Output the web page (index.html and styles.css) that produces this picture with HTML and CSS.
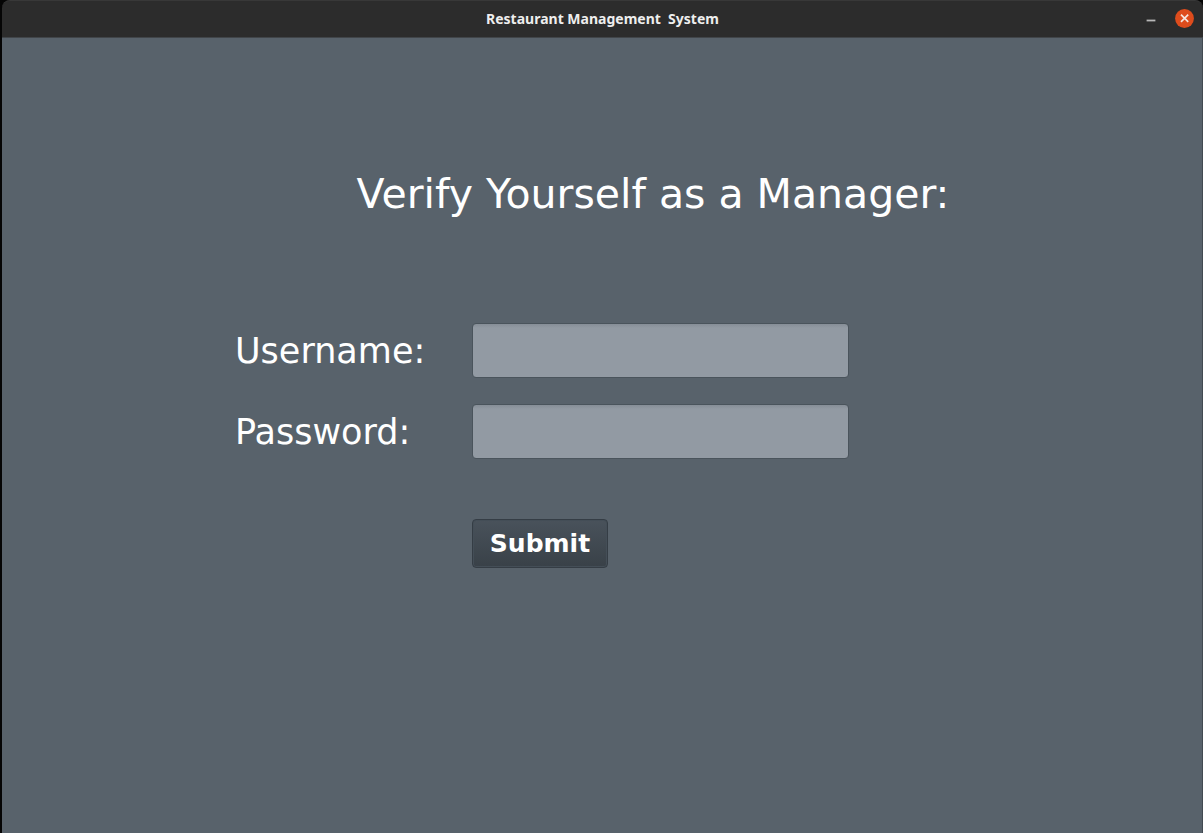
FILE: index.html
```html
<!DOCTYPE html>
<html lang="en">
<head>
<meta charset="utf-8">
<title>Restaurant Management System</title>
<link rel="stylesheet" href="styles.css">
</head>
<body>
<div class="window">
  <header class="titlebar">
    <h1 class="window-title">Restaurant Management&nbsp; System</h1>
    <div class="controls">
      <button class="control" type="button" aria-label="Minimize">
        <svg width="20" height="20" viewBox="0 0 20 20"><path d="M5.6 11.5h8.8" stroke="#b8b8b8" stroke-width="1.8"/></svg>
      </button>
      <button class="control" type="button" aria-label="Close">
        <svg width="20" height="20" viewBox="0 0 20 20"><circle cx="9.5" cy="9.5" r="9.4" fill="#de4c1c"/><path d="M6 5.7l7.2 7.2M13.2 5.7l-7.2 7.2" stroke="#f6e6df" stroke-width="1.7"/></svg>
      </button>
    </div>
  </header>
  <main class="content">
    <h2 class="heading">Verify Yourself as a Manager:</h2>
    <form class="form">
      <label class="label" for="username">Username:</label>
      <input class="field" id="username" type="text">
      <label class="label" for="password">Password:</label>
      <input class="field" id="password" type="password">
      <button class="submit" type="button">Submit</button>
    </form>
  </main>
</div>
</body>
</html>
```
FILE: styles.css
```css
* {
  box-sizing: border-box;
}

body {
  margin: 0;
  background: #050505;
  font-family: "DejaVu Sans", sans-serif;
  color: #fff;
}

.window {
  display: flex;
  flex-direction: column;
  min-height: 100vh;
  padding-left: 2px;
}

.titlebar {
  display: grid;
  grid-template-columns: 1fr auto 1fr;
  align-items: center;
  height: 38px;
  border-top: 1px solid #383838;
  border-bottom: 1px solid #414549;
  border-radius: 8px 8px 0 0;
  background: #2c2c2c;
}

.window-title {
  grid-column: 2;
  margin: 0;
  font: bold 14px/20px "Noto Sans", sans-serif;
  color: #eee;
}

.controls {
  display: flex;
  justify-content: flex-end;
  gap: 14px;
  padding-right: 8px;
}

.control {
  display: flex;
  padding: 0;
  border: 0;
  background: none;
}

.content {
  flex: 1;
  padding-top: 132px;
  border-right: 1px solid #424a51;
  background: #58626b;
}

.heading {
  margin: 0 0 105px;
  padding-left: 102px;
  font-size: 41px;
  font-weight: normal;
  line-height: 48px;
  text-align: center;
}

.form {
  display: grid;
  grid-template-columns: 237px 377px;
  row-gap: 26px;
  justify-content: center;
  align-items: center;
  padding-right: 120px;
}

.label {
  font-size: 35px;
  line-height: 40px;
}

.field {
  width: 100%;
  height: 55px;
  padding: 0 12px;
  border: 1px solid #4a545c;
  border-radius: 4px;
  background: linear-gradient(#868e97, #929aa3 4px);
  color: #fff;
  font: 28px "DejaVu Sans", sans-serif;
}

.submit {
  grid-column: 2;
  justify-self: start;
  width: 136px;
  height: 49px;
  margin-top: 34px;
  padding: 0;
  border: 1px solid #353d45;
  border-radius: 4px;
  background: linear-gradient(#49525b, #394148);
  box-shadow: inset 0 0 0 1px #444e57;
  color: #fff;
  font: bold 25px "DejaVu Sans", sans-serif;
}
```
